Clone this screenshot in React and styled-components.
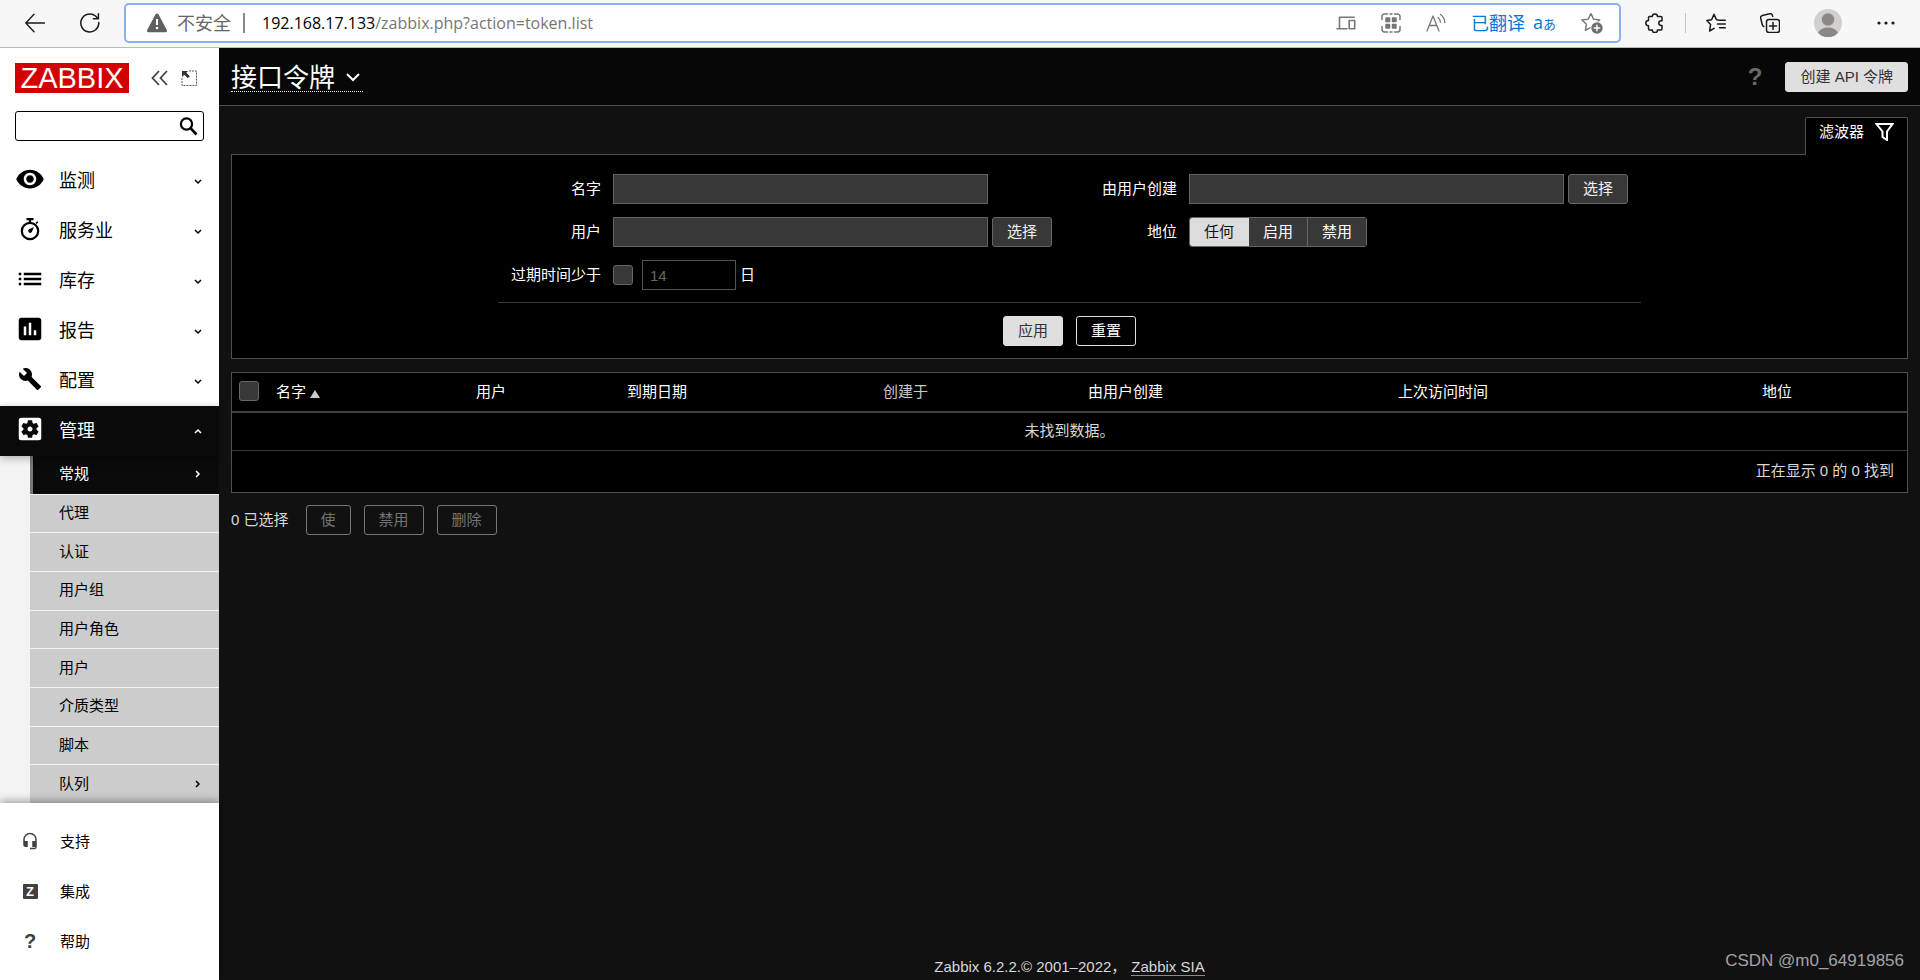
import React, { useState } from 'react';
import styled, { createGlobalStyle, css } from 'styled-components';
import {
  MdVisibility, MdList, MdInsertChart, MdBuild, MdSettingsApplications, MdHeadsetMic,
} from 'react-icons/md';

const GlobalStyle = createGlobalStyle`
  * {
    box-sizing: border-box;
  }

  body {
    margin: 0;
    background: #111;
    color: #d8d8d8;
    font-family: 'Liberation Sans', 'Noto Sans CJK SC', sans-serif;
    font-size: 15px;
    line-height: 20px;
  }

  button, input {
    font: inherit;
    color: inherit;
  }

  button {
    padding: 0;
    border: 0;
    background: none;
    cursor: pointer;
  }

  a {
    color: inherit;
    text-decoration: none;
  }

  svg {
    display: block;
    flex: none;
  }
`;

const Page = styled.div`
  display: flex;
  flex-direction: column;
  min-height: 100vh;
  position: relative;
`;

const BrowserBar = styled.div`
  display: flex;
  align-items: center;
  height: 48px;
  padding: 0 24px 1px 25px;
  background: #f7f7f7;
  border-bottom: 1px solid #b9bdb9;
  color: #1b1b1b;
`;

const BrowserGroup = styled.div`
  display: flex;
  align-items: center;
  gap: ${({ $gap }) => $gap}px;
`;

const AddressBar = styled.div`
  flex: 1;
  display: flex;
  align-items: center;
  height: 40px;
  margin: 0 24px;
  padding: 0 16px 0 20px;
  background: #fff;
  border: 2px solid #8cb0ec;
  border-radius: 5px;
  color: #767676;
  font-family: 'Open Sans', 'Noto Sans CJK SC', sans-serif;
  font-size: 16px;
`;

const Insecure = styled.span`
  display: flex;
  align-items: center;
  gap: 9px;
  padding-right: 12px;
  color: #666;
  font-size: 18px;
`;

const Divider = styled.span`
  width: ${({ $width }) => $width || 1}px;
  height: 20px;
  background: ${({ $color }) => $color};
`;

const Url = styled.span`
  flex: 1;
  padding-left: 17px;

  b {
    font-weight: 400;
    color: #000;
  }
`;

const Translated = styled.button`
  display: flex;
  align-items: center;
  gap: 8px;
  color: #0078d4;
  font-size: 18px;

  small {
    font-family: 'Open Sans', 'Noto Sans CJK JP', sans-serif;
    font-size: 18px;
    line-height: 20px;
  }

  i {
    font-size: 13px;
    font-style: normal;
  }
`;

const Body = styled.div`
  flex: 1;
  display: flex;
`;

const Sidebar = styled.aside`
  flex: none;
  display: flex;
  flex-direction: column;
  width: 219px;
  background: #fff;
  color: #000;
`;

const SidebarHead = styled.div`
  display: flex;
  align-items: center;
  gap: 13px;
  padding: 15px 15px 18px;
`;

const Logo = styled.a`
  flex: none;
  width: 114px;
  height: 30px;
  margin-right: 9px;
  background: #d40000;
  color: #fff;
  font-size: 29px;
  line-height: 31px;
  text-align: center;
`;

const HeadButton = styled.button`
  color: #444;
`;

const Search = styled.form`
  display: flex;
  align-items: center;
  height: 30px;
  margin: 0 15px 15px;
  padding-right: 5px;
  border: 1px solid #000;
  border-radius: 3px;

  input {
    flex: 1;
    min-width: 0;
    padding: 0 8px;
    border: 0;
    outline: 0;
    background: none;
  }
`;

const MenuItem = styled.a`
  display: flex;
  align-items: center;
  height: 50px;
  padding: 0 17px 0 15px;
  font-size: 18px;

  ${({ $active }) => $active && css`
    position: relative;
    background: #0a0a0a;
    color: #fff;
    box-shadow: 0 2px 8px rgba(0, 0, 0, 0.3);
  `}
`;

const MenuIcon = styled.span`
  display: flex;
  justify-content: center;
  width: 30px;
  margin: 0 14px 4px 0;
`;

const MenuLabel = styled.span`
  flex: 1;
`;

const SubMenu = styled.nav`
  flex: 1;
  display: flex;
  flex-direction: column;
  gap: 1px;
  padding-left: 30px;
  background: #f3f3f3;
`;

const SubItem = styled.a`
  flex: 1;
  display: flex;
  align-items: center;
  min-height: 36px;
  max-height: 40px;
  padding: 0 17px 1px 29px;
  background: #ccc;

  ${({ $active }) => $active && css`
    padding-left: 26px;
    border-left: 3px solid #777;
    background: #0a0a0a;
    color: #fff;
  `}
`;

const SidebarFoot = styled.nav`
  position: relative;
  padding: 14px 0 13px;
  background: #fff;
  box-shadow: 0 -2px 8px rgba(0, 0, 0, 0.35);
`;

const FootItem = styled(MenuItem)`
  font-size: 15px;
`;

const FootIcon = styled(MenuIcon)`
  margin: 0 15px 2px 0;
  color: #404040;
  font-size: 20px;
  font-weight: 700;
`;

const LetterBox = styled.span`
  width: 15px;
  height: 15px;
  background: #404040;
  color: #fff;
  font-size: 13px;
  line-height: 15px;
  text-align: center;
  border-radius: 1px;
`;

const Main = styled.main`
  flex: 1;
  min-width: 0;
  display: flex;
  flex-direction: column;
`;

const Header = styled.header`
  display: flex;
  align-items: center;
  height: 58px;
  padding: 0 12px;
  background: #070707;
  border-bottom: 1px solid #4f4f4f;
`;

const Title = styled.h1`
  margin: 0 auto 0 0;
  font-size: 26px;
  font-weight: 400;
  line-height: 28px;
  color: #fff;

  button {
    display: flex;
    align-items: center;
    gap: 11px;
    height: 31px;
    padding: 3px 3px 0 0;
    border-bottom: 1px dotted #e8e8e8;
  }
`;

const HelpLink = styled.a`
  margin-right: 23px;
  color: #696969;
  font-size: 24px;
  font-weight: 700;
`;

const Button = styled.button`
  height: 30px;
  padding: 0 14px;
  border: 1px solid #dfdfdf;
  border-radius: 3px;
  background: #dfdfdf;
  color: #333;

  ${({ $kind }) => $kind === 'grey' && css`
    background: #383838;
    border-color: #666;
    color: #f2f2f2;
  `}

  ${({ $kind }) => $kind === 'outline' && css`
    background: none;
    color: #fff;
  `}

  &:disabled {
    background: none;
    border-color: #777;
    color: #737373;
    cursor: default;
  }
`;

const Content = styled.div`
  flex: 1;
  display: flex;
  flex-direction: column;
  padding: 11px 12px 3px;
`;

const FilterTab = styled.button`
  position: relative;
  align-self: flex-end;
  display: flex;
  align-items: center;
  gap: 11px;
  height: 38px;
  margin-bottom: -1px;
  padding: 0 13px 10px;
  background: #000;
  border: 1px solid #4f4f4f;
  border-bottom: 0;
  border-radius: 2px 2px 0 0;
  color: #fff;
`;

const FilterPanel = styled.form`
  display: flex;
  flex-direction: column;
  align-items: center;
  margin-bottom: 13px;
  padding: 19px 12px 12px;
  background: #000;
  border: 1px solid #4f4f4f;
`;

const FilterGrid = styled.div`
  display: grid;
  grid-template-columns: auto 477px auto 439px;
  column-gap: 12px;
  row-gap: 13px;
  padding: 0 13px 12px;
  border-bottom: 1px solid #383838;
  color: #fff;

  > label, > span {
    line-height: 30px;
    text-align: right;
  }
`;

const Field = styled.div`
  display: flex;
  align-items: center;
  gap: 4px;
`;

const TextInput = styled.input`
  width: ${({ $short }) => ($short ? 94 : 375)}px;
  height: 30px;
  padding: 0 7px;
  background: ${({ $short }) => ($short ? '#000' : '#383838')};
  border: 1px solid ${({ $short }) => ($short ? '#525252' : '#626262')};
  border-radius: 0;
  outline: 0;

  &::placeholder {
    color: #666;
  }
`;

const Checkbox = styled.input.attrs({ type: 'checkbox' })`
  appearance: none;
  width: 20px;
  height: 20px;
  margin: 0 5px 0 0;
  background: #383838;
  border: 1px solid #666;
  border-radius: 3px;
  vertical-align: top;

  &:checked {
    background: #999;
  }
`;

const Segments = styled.div`
  display: flex;
  border: 1px solid #666;
  border-radius: 3px;
  overflow: hidden;

  label {
    height: 28px;
    padding: 0 14px;
    background: #383838;
    line-height: 28px;
    cursor: pointer;
  }

  label + label {
    border-left: 1px solid #666;
  }

  label:has(:checked) {
    background: #dcdcdc;
    color: #111;
  }

  label:has(:checked) + label {
    border-left-color: #dcdcdc;
  }

  input {
    appearance: none;
    width: 0;
    height: 0;
    margin: 0;
    display: block;
  }
`;

const FilterActions = styled.div`
  display: flex;
  gap: 13px;
  padding-top: 13px;
`;

const Table = styled.table`
  width: 100%;
  table-layout: fixed;
  border: 1px solid #4f4f4f;
  border-spacing: 0;
  background: #000;

  th {
    height: 40px;
    padding: 0 6px;
    border-bottom: 2px solid #404040;
    font-weight: 400;
    text-align: left;
  }

  th:first-child {
    padding: 0 0 2px 7px;
  }

  td {
    height: 38px;
    padding: 0 10px 2px;
    border-bottom: 1px solid #383838;
    text-align: center;
  }

  tfoot td {
    height: 41px;
    border-bottom: 0;
    text-align: right;
    padding-right: 13px;
  }
`;

const HeadCell = styled.th`
  color: ${({ $plain }) => ($plain ? '#c8c8c8' : '#fff')};

  a {
    display: inline-flex;
    align-items: center;
    gap: 4px;
  }
`;

const BulkActions = styled.div`
  display: flex;
  align-items: center;
  padding-top: 12px;

  span {
    margin-right: 17px;
  }

  button {
    margin-right: 13px;
  }
`;

const Footer = styled.footer`
  margin-top: auto;
  text-align: center;

  a {
    border-bottom: 1px solid #8a8a8a;
    margin-left: 5px;
  }
`;

const Watermark = styled.div`
  position: absolute;
  right: 16px;
  bottom: 9px;
  color: #a3a3a3;
  font-size: 17px;
`;

const Line = ({ children, size = 20, width = 1.4 }) => (
  <svg
    width={size}
    height={size}
    viewBox="0 0 20 20"
    fill="none"
    stroke="currentColor"
    strokeWidth={width}
    strokeLinecap="round"
    strokeLinejoin="round"
    aria-hidden="true"
  >
    {children}
  </svg>
);

const CHEVRONS = {
  down: 'M1 3l3 3 3-3',
  up: 'M1 6l3-3 3 3',
  right: 'M2 1l3 3-3 3',
};

const Chevron = ({ dir }) => (
  <svg width="8" height="8" viewBox="0 0 8 8" fill="none" stroke="currentColor" strokeWidth="1.5" aria-hidden="true">
    <path d={CHEVRONS[dir]} />
  </svg>
);

const Stopwatch = () => (
  <svg width="22" height="24" viewBox="0 0 22 24" fill="none" stroke="currentColor" aria-hidden="true">
    <circle cx="11" cy="14" r="8.2" strokeWidth="2.2" />
    <path d="M7.5 2.2h7M11 2v4" strokeWidth="2.2" />
    <path d="M17 6.5l1.8-1.8" strokeWidth="1.6" />
    <path d="M15 10l-2.2 5a2 2 0 1 1-2.8-2.8z" fill="currentColor" stroke="none" />
  </svg>
);

const STAR = 'M9 1.5l2.4 5 5.6.8-4 3.9.9 5.5L9 14l-5 2.7.9-5.5-4-3.9 5.7-.8z';

const menu = [
  { label: '监测', icon: <MdVisibility size={30} /> },
  { label: '服务业', icon: <Stopwatch /> },
  { label: '库存', icon: <MdList size={30} /> },
  { label: '报告', icon: <MdInsertChart size={30} /> },
  { label: '配置', icon: <MdBuild size={24} /> },
  { label: '管理', icon: <MdSettingsApplications size={30} />, active: true },
];

const subMenu = ['常规', '代理', '认证', '用户组', '用户角色', '用户', '介质类型', '脚本', '队列'];

const footMenu = [
  { label: '支持', icon: <MdHeadsetMic size={18} /> },
  { label: '集成', icon: <LetterBox>Z</LetterBox> },
  { label: '帮助', icon: '?' },
];

const columns = [
  { label: '名字', width: 200, sorted: true },
  { label: '用户', width: 151 },
  { label: '到期日期', width: 256 },
  { label: '创建于', width: 205, plain: true },
  { label: '由用户创建', width: 310 },
  { label: '上次访问时间', width: 364 },
  { label: '地位', width: 151 },
];

const statuses = ['任何', '启用', '禁用'];

function Browser() {
  return (
    <BrowserBar>
      <BrowserGroup $gap={35}>
        <button type="button" aria-label="后退">
          <Line><path d="M19.5 10H.8M9 1.2L.8 10 9 18.8" /></Line>
        </button>
        <button type="button" aria-label="刷新">
          <Line width={1.5}><path d="M18.8 9.5A9 9 0 1 1 15.5 3l2.2 2.2M18.4.8v4.9h-5" /></Line>
        </button>
      </BrowserGroup>
      <AddressBar>
        <Insecure>
          <svg width="22" height="20" viewBox="0 0 22 20" aria-hidden="true">
            <path d="M11 .5a1.8 1.8 0 0 1 1.6 1l8.2 15.4a1.6 1.6 0 0 1-1.4 2.4H2.6a1.6 1.6 0 0 1-1.4-2.4L9.4 1.5A1.8 1.8 0 0 1 11 .5z" fill="#5f5f5f" />
            <path d="M11 6v6" stroke="#fff" strokeWidth="2" />
            <circle cx="11" cy="15" r="1.3" fill="#fff" />
          </svg>
          不安全
        </Insecure>
        <Divider $width={2} $color="#8a8a8a" />
        <Url>
          <b>192.168.17.133</b>
          /zabbix.php?action=token.list
        </Url>
        <BrowserGroup $gap={25}>
          <button type="button" aria-label="设备">
            <Line width={1.6}>
              <path d="M3.5 14.5V4.2h14.7M1 15.8h10" />
              <path d="M13.2 7.5h5.5v8.3h-5.5z" />
            </Line>
          </button>
          <button type="button" aria-label="应用">
            <Line width={1.5}>
              <path d="M1 6.5V3.5A2.5 2.5 0 0 1 3.5 1h3M13.5 1h3A2.5 2.5 0 0 1 19 3.500v3M19 13.500v3a2.5 2.5 0 0 1-2.500 2.500h-3M6.500 19h-3A2.500 2.500 0 0 1 1 16.500v-3M9 1h2M9 19h2" />
              <path d="M5 5h3.5v3.500H5zM11.500 5H15v3.500h-3.500zM5 11.500h3.500V15H5zM11.500 11.500H15V15h-3.500z" fill="currentColor" />
            </Line>
          </button>
          <button type="button" aria-label="朗读">
            <Line width={1.3}>
              <path d="M1 18L7 3l6 15M3.2 12.5h7.7M12 4.500a6 6 0 0 1 2.500 4.700M14.500 1.500a10 10 0 0 1 4.300 8" />
            </Line>
          </button>
          <Translated type="button">
            已翻译
            <small>
              a
              <i>あ</i>
            </small>
          </Translated>
          <button type="button" aria-label="收藏">
            <Line size={22} width={1.3}>
              <path d={STAR} />
              <circle cx="14.5" cy="14.5" r="6" fill="#fff" stroke="none" />
              <circle cx="14.5" cy="14.5" r="5.2" fill="#6e6e6e" stroke="none" />
              <path d="M12 14.5h5M14.5 12v5" stroke="#fff" />
            </Line>
          </button>
        </BrowserGroup>
      </AddressBar>
      <BrowserGroup $gap={20}>
        <button type="button" aria-label="扩展">
          <Line width={1.5}>
            <path d="M4 3.5h3.300a2.600 2.600 0 0 1 5.200 0H16a1 1 0 0 1 1 1v3.200h-.8a2.400 2.400 0 0 0 0 4.800h.8v3.500a1 1 0 0 1-1 1h-3.500a2.600 2.600 0 0 1-5.200 0H4.500a1 1 0 0 1-1-1v-3.200a2.700 2.700 0 0 1 0-5.400V4.500z" />
          </Line>
        </button>
        <Divider $color="#c6c6c6" />
        <BrowserGroup $gap={34}>
          <button type="button" aria-label="收藏夹">
            <Line width={1.5}>
              <path d="M12.5 7l-2-.3L8 1.200 5.600 6.700.8 7.400l3.800 4-1 6.600 4.500-2.600M13 7.200h6.300M11.500 11h7.800M13.500 14.800h5.800" />
            </Line>
          </button>
          <button type="button" aria-label="集锦">
            <Line width={1.5}>
              <rect x="6.5" y="6.5" width="13" height="13" rx="2.5" />
              <path d="M13 9.500v7M9.500 13h7M3.800 13.500a2.500 2.500 0 0 1-1.500-1.800L.7 5.500a2.500 2.500 0 0 1 1.800-3L9.500.8a2.500 2.500 0 0 1 3 1.800l.2.700" />
            </Line>
          </button>
          <button type="button" aria-label="用户">
            <svg width="28" height="28" viewBox="0 0 28 28" aria-hidden="true">
              <circle cx="14" cy="14" r="14" fill="#d2d0ce" />
              <circle cx="14" cy="10.5" r="6.2" fill="#8a8886" />
              <path d="M4 24a10.500 8 0 0 1 20 0 14 14 0 0 1-20 0z" fill="#8a8886" />
            </svg>
          </button>
          <button type="button" aria-label="更多">
            <svg width="20" height="20" viewBox="0 0 20 20" fill="currentColor" aria-hidden="true">
              <circle cx="3" cy="10" r="1.6" />
              <circle cx="10" cy="10" r="1.6" />
              <circle cx="17" cy="10" r="1.6" />
            </svg>
          </button>
        </BrowserGroup>
      </BrowserGroup>
    </BrowserBar>
  );
}

function Navigation() {
  return (
    <Sidebar>
      <SidebarHead>
        <Logo href="#">ZABBIX</Logo>
        <HeadButton type="button" aria-label="收起">
          <svg width="17" height="16" viewBox="0 0 17 16" fill="none" stroke="currentColor" strokeWidth="1.8" aria-hidden="true">
            <path d="M8 1L1.5 8 8 15M16 1L9.5 8l6.5 7" />
          </svg>
        </HeadButton>
        <HeadButton type="button" aria-label="隐藏">
          <svg width="16" height="16" viewBox="0 0 16 16" aria-hidden="true">
            <path d="M8 1h7.5v14.5H1V8" fill="none" stroke="#555" strokeDasharray="2 1" />
            <path d="M1 1h6L5.300 2.700l3.500 3.500-2 2-3.500-3.500L1 7z" fill="#333" />
          </svg>
        </HeadButton>
      </SidebarHead>
      <Search role="search">
        <input type="text" aria-label="搜索" />
        <button type="button" aria-label="查找">
          <svg width="19" height="19" viewBox="0 0 19 19" fill="none" stroke="#000" aria-hidden="true">
            <circle cx="7.5" cy="7" r="5.6" strokeWidth="2.2" />
            <path d="M11.500 11.200l6 6.300" strokeWidth="2.6" />
          </svg>
        </button>
      </Search>
      <nav>
        {menu.map(({ label, icon, active }) => (
          <MenuItem key={label} href="#" $active={active}>
            <MenuIcon>{icon}</MenuIcon>
            <MenuLabel>{label}</MenuLabel>
            <Chevron dir={active ? 'up' : 'down'} />
          </MenuItem>
        ))}
      </nav>
      <SubMenu>
        {subMenu.map((label, i) => (
          <SubItem key={label} href="#" $active={i === 0}>
            <MenuLabel>{label}</MenuLabel>
            {(label === '常规' || label === '队列') && <Chevron dir="right" />}
          </SubItem>
        ))}
      </SubMenu>
      <SidebarFoot>
        {footMenu.map(({ label, icon }) => (
          <FootItem key={label} href="#">
            <FootIcon>{icon}</FootIcon>
            <MenuLabel>{label}</MenuLabel>
          </FootItem>
        ))}
      </SidebarFoot>
    </Sidebar>
  );
}

function Filter() {
  const [status, setStatus] = useState(statuses[0]);

  return (
    <FilterPanel>
      <FilterGrid>
        <label htmlFor="name">名字</label>
        <Field>
          <TextInput id="name" type="text" />
        </Field>
        <label htmlFor="creator">由用户创建</label>
        <Field>
          <TextInput id="creator" type="text" />
          <Button type="button" $kind="grey">选择</Button>
        </Field>
        <label htmlFor="user">用户</label>
        <Field>
          <TextInput id="user" type="text" />
          <Button type="button" $kind="grey">选择</Button>
        </Field>
        <span id="status-label">地位</span>
        <Field>
          <Segments role="radiogroup" aria-labelledby="status-label">
            {statuses.map((s) => (
              <label key={s}>
                <input type="radio" name="status" checked={status === s} onChange={() => setStatus(s)} />
                {s}
              </label>
            ))}
          </Segments>
        </Field>
        <label htmlFor="expires">过期时间少于</label>
        <Field>
          <Checkbox id="expires" />
          <TextInput $short type="text" placeholder="14" aria-label="日" />
          日
        </Field>
      </FilterGrid>
      <FilterActions>
        <Button type="button">应用</Button>
        <Button type="button" $kind="outline">重置</Button>
      </FilterActions>
    </FilterPanel>
  );
}

function Tokens() {
  return (
    <>
      <Table>
        <colgroup>
          <col width={38} />
          {columns.map(({ label, width }) => <col key={label} width={width} />)}
        </colgroup>
        <thead>
          <tr>
            <HeadCell><Checkbox aria-label="全选" /></HeadCell>
            {columns.map(({ label, sorted, plain }) => (
              <HeadCell key={label} $plain={plain}>
                {sorted ? (
                  <a href="#">
                    {label}
                    <svg width="10" height="12" viewBox="0 0 10 12" aria-hidden="true">
                      <path d="M5 4l5 8H0z" fill="#ccc" />
                    </svg>
                  </a>
                ) : label}
              </HeadCell>
            ))}
          </tr>
        </thead>
        <tbody>
          <tr>
            <td colSpan={8}>未找到数据。</td>
          </tr>
        </tbody>
        <tfoot>
          <tr>
            <td colSpan={8}>正在显示 0 的 0 找到</td>
          </tr>
        </tfoot>
      </Table>
      <BulkActions>
        <span>0 已选择</span>
        <Button type="button" disabled>使</Button>
        <Button type="button" disabled>禁用</Button>
        <Button type="button" disabled>删除</Button>
      </BulkActions>
    </>
  );
}

export default function App() {
  return (
    <Page>
      <GlobalStyle />
      <Browser />
      <Body>
        <Navigation />
        <Main>
          <Header>
            <Title>
              <button type="button">
                接口令牌
                <svg width="14" height="9" viewBox="0 0 14 9" fill="none" stroke="currentColor" strokeWidth="2" aria-hidden="true">
                  <path d="M1 1l6 6 6-6" />
                </svg>
              </button>
            </Title>
            <HelpLink href="#">?</HelpLink>
            <Button type="button">创建 API 令牌</Button>
          </Header>
          <Content>
            <FilterTab type="button">
              滤波器
              <svg width="19" height="18" viewBox="0 0 19 18" fill="none" stroke="currentColor" strokeWidth="2" aria-hidden="true">
                <path d="M1.5 1h16L12 8.500V17l-4.500-3V8.500z" />
              </svg>
            </FilterTab>
            <Filter />
            <Tokens />
            <Footer>
              Zabbix 6.2.2.© 2001–2022，
              <a href="#">Zabbix SIA</a>
            </Footer>
          </Content>
        </Main>
      </Body>
      <Watermark>CSDN @m0_64919856</Watermark>
    </Page>
  );
}
